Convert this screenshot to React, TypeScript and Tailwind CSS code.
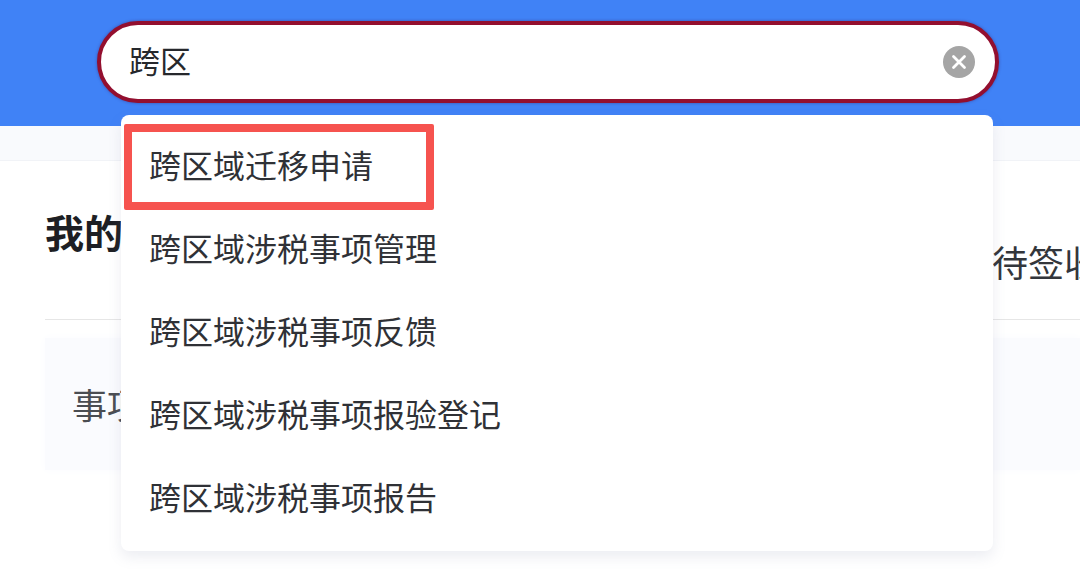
const FONT = "font-['Liberation_Sans','Noto_Sans_CJK_SC',sans-serif]"

const SUGGESTIONS = [
  '跨区域迁移申请',
  '跨区域涉税事项管理',
  '跨区域涉税事项反馈',
  '跨区域涉税事项报验登记',
  '跨区域涉税事项报告',
]

export default function App() {
  return (
    <div className={`relative h-[585px] w-[1080px] overflow-hidden bg-white ${FONT}`}>
      {/* blue header with the search box */}
      <div className="h-[126px] bg-[#4082f6] pt-[21px] pl-[97px]">
        <div className="flex h-[82px] w-[902px] items-center justify-between rounded-full border-[4px] border-[#930f2f] bg-white pr-[20px] pl-[28px] shadow-[0_0_3px_rgba(60,20,80,0.5)]">
          <span className="text-[31px] leading-none text-[#26282c]">跨区</span>
          <span className="flex h-8 w-8 items-center justify-center rounded-full bg-[#a5a5a5]">
            <svg width="18" height="18" viewBox="0 0 18 18" fill="none" stroke="white" strokeWidth="2.8" strokeLinecap="round">
              <path d="M3.5 3.5l11 11M14.5 3.5l-11 11" />
            </svg>
          </span>
        </div>
      </div>
      <div className="h-[35px] border-b border-[#f1f3f7] bg-[#f9fafd]" />

      {/* page behind the dropdown */}
      <div className="ml-[45px] flex h-[159px] items-start justify-between border-b border-[#e6e6e6]">
        <h2 className="pt-[54px] text-[39px] leading-none font-bold text-[#1d1f24]">我的待办</h2>
        <span className="w-[88px] overflow-hidden pt-[86px] text-[36px] leading-none whitespace-nowrap text-[#33363b]">待签收</span>
      </div>
      <div className="mt-[18px] ml-[45px] flex h-[132px] items-center bg-[#fafbfe] pt-[4px] pl-[27px] shadow-[0_0_10px_#fafbfe]">
        <span className="text-[35px] leading-none text-[#4a4d52]">事项</span>
      </div>

      {/* suggestions */}
      <div className="absolute top-[115px] left-[121px] h-[436px] w-[872px] rounded-[8px] bg-white pt-[10px] shadow-[0_6px_14px_rgba(120,130,160,0.14)]">
        {SUGGESTIONS.map((item) => (
          <div key={item} className="flex h-[83px] items-center pl-[28px] text-[32px] leading-none text-[#2f3136]">
            {item}
          </div>
        ))}
        <div className="absolute top-[9px] left-[3px] h-[86px] w-[310px] rounded-[2px] border-[8px] border-[#f6534f]" />
      </div>
    </div>
  )
}
